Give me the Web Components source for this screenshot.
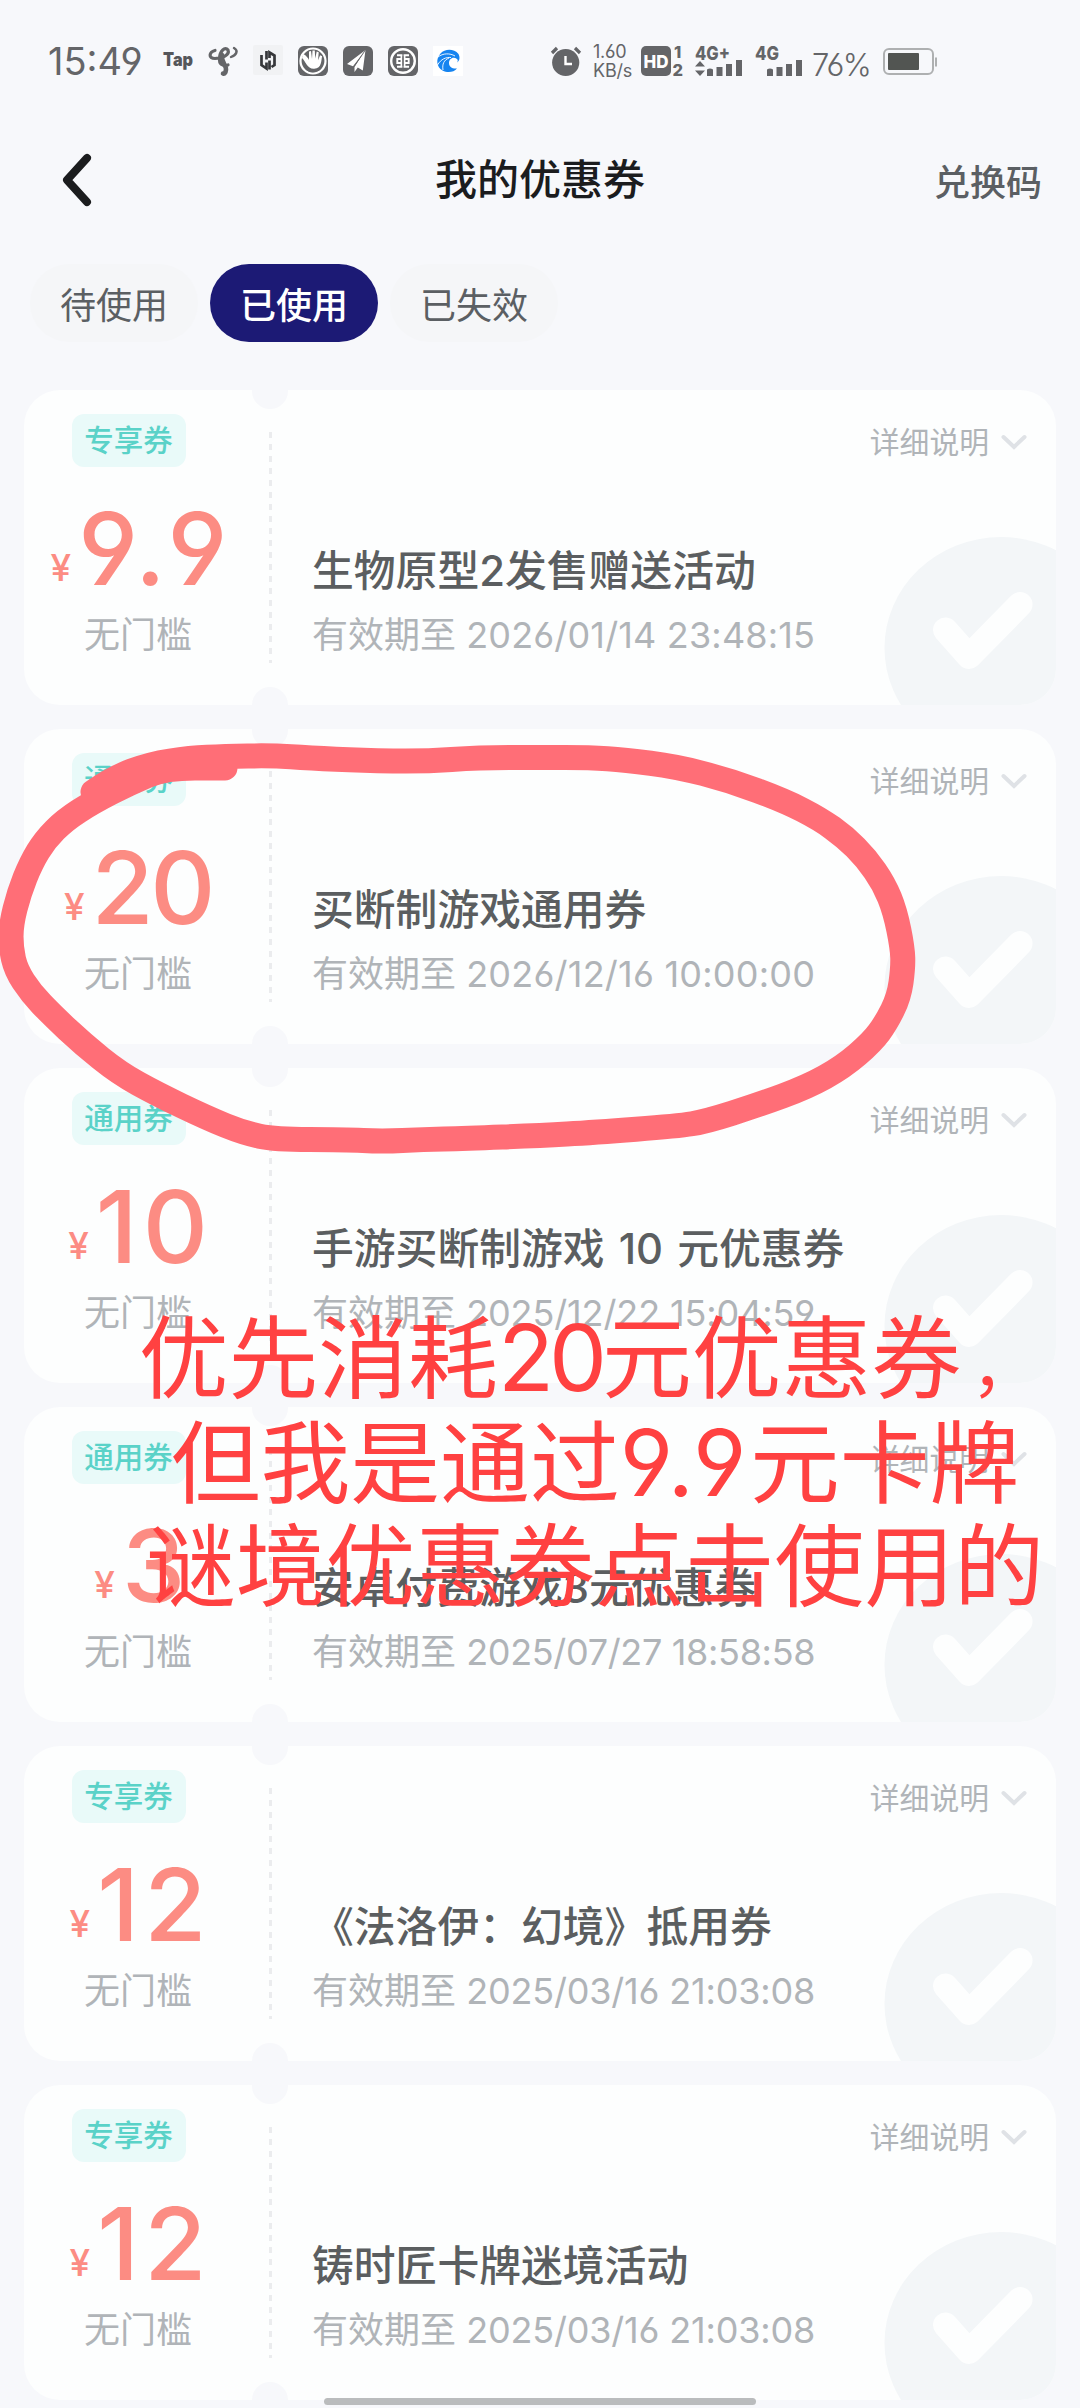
<!DOCTYPE html>
<html lang="zh-CN">
<head>
<meta charset="utf-8">
<title>我的优惠券</title>
<style>
html,body{margin:0;padding:0;background:#f7f8fb}
body{width:1080px;height:2408px;overflow:hidden;font-family:Inter,"Noto Sans CJK SC",sans-serif;font-feature-settings:"cv03","cv04"}
</style>
</head>
<body>
<coupon-screen></coupon-screen>
<script>
const define = (name, html, setup) => {
  const tpl = document.createElement('template');
  tpl.innerHTML = html;
  customElements.define(name, class extends HTMLElement {
    connectedCallback() {
      if (this.shadowRoot) return;
      this.attachShadow({mode: 'open'}).append(tpl.content.cloneNode(true));
      if (setup) setup(this, this.shadowRoot);
    }
  });
};

define('status-bar', `
<style>
:host{display:flex;height:92px;padding-top:30px;box-sizing:border-box;align-items:center;color:#646568}
svg{display:block;flex:none;overflow:visible}
.time{width:114px;padding-left:48px;box-sizing:border-box;font-size:38px;line-height:46px;white-space:nowrap;flex:none}
.left{display:flex;align-items:center;width:551px;flex:none}
.apps{display:flex;gap:15px;margin-left:49px}
.right{display:flex;align-items:center}
.speed{display:flex;flex-direction:column;width:40px;margin:0 8px 0 12px;font-size:18px;line-height:19px;letter-spacing:-.2px;white-space:nowrap}
.pct{font-size:31px;letter-spacing:-.4px;font-weight:300;line-height:38px;margin:7px 0 0 8px;width:72px;white-space:nowrap}
text{font-family:Inter,sans-serif}
</style>
<div class="left">
  <div class="time">15:49</div>
  <div class="apps">
    <svg width="30" height="30" viewBox="0 0 30 30"><text x="0" y="20" font-size="18.5" font-weight="900" fill="#55565a" textLength="30" lengthAdjust="spacingAndGlyphs">Tap</text></svg>
    <svg width="30" height="30" viewBox="0 0 30 30" fill="none" stroke="#646568" stroke-linecap="round"><path d="M7 4.500C1 6 0 12.500 7 12.500C14 12.500 22 9 20 4C17 0 12 5 11.500 12C11 18 14 20.500 20 19" stroke-width="3.200"/><path d="M14 9C13 17 18.500 19 18 23.500C17.500 26.500 17 28 15 27.500" stroke-width="4.600"/><path d="M26 2C31 5 28 9 23 11" stroke-width="2.400"/></svg>
    <svg width="30" height="30" viewBox="0 0 30 30"><rect width="30" height="30" rx="2" y="-1" fill="#f1f2f4"/><path d="M8.500 9v10l5 3.500v-6M13.500 5v8.500M16.500 23.500v-9M16.500 12V6.500l5 3v9.500l-3 2" fill="none" stroke="#36373a" stroke-width="2.700"/></svg>
    <svg width="30" height="30" viewBox="0 0 30 30"><rect width="30" height="30" rx="6" fill="#646568"/><circle cx="15" cy="15" r="12.500" fill="none" stroke="#fff" stroke-width="2.200"/><path d="M5 8c3 1 5 4 6 6V5.500l2-.5 1 8 .5-8.500 2.300 0 .4 8 1.500-7 2 .7-.6 8 2-5 2 1c-1 4 0 12-8 12.500C9 23 8 16 4 12z" fill="#fff"/><path d="M8 23c3 3 10 4 15-1" stroke="#646568" stroke-width="1.500" fill="none"/></svg>
    <svg width="30" height="30" viewBox="0 0 30 30"><rect width="30" height="30" rx="6" fill="#646568"/><path d="M22.500 4L4 18l6 2.200zM22.500 4L11.500 21v5l3.300-4.500 5 3z" fill="#fff"/><path d="M22.500 4L11 20.500" stroke="#646568" stroke-width=".8"/></svg>
    <svg width="30" height="30" viewBox="0 0 30 30"><rect width="30" height="30" rx="6" fill="#646568"/><g fill="none" stroke="#fff"><circle cx="15" cy="15" r="11.800" stroke-width="2.400"/><path d="M9 9.200h12M9 20.800h12M13.500 9v12M16.500 9v12M13.500 13H9.300v4h4.200M16.500 13h4.200v4h-4.200" stroke-width="1.900"/></g><path d="M15 8v14" stroke="#646568" stroke-width="1.200"/></svg>
    <svg width="30" height="30" viewBox="0 0 30 30"><rect width="30" height="30" fill="#fff"/><path d="M25.500 8C21 2.500 12 2.500 7.500 7.500C2.500 13 3.500 21 9.500 24.500C15 27.500 21 26 24 22.500C19 23 16 20.500 16 17C16 13 20 10 24 13C25 14 25 15 24 16.500C27 14.500 27 11 25.500 8z" fill="#1684f0"/><path d="M5 11C10 7 17 7 22 10M4.500 19C8 13 13 11 18 11.500M10 24C9 18 11 14 16 12" fill="none" stroke="#fff" stroke-width=".9"/></svg>
  </div>
</div>
<div class="right">
  <svg width="30" height="30" viewBox="0 0 30 30"><circle cx="14.700" cy="16.500" r="13.600" fill="#646568"/><path d="M1 7l5-5M29 7l-5-5" stroke="#646568" stroke-width="3.200"/><path d="M14.500 10v8h6.500" fill="none" stroke="#fff" stroke-width="2.400"/></svg>
  <div class="speed"><span>1.60</span><span>KB/s</span></div>
  <svg width="43" height="32" viewBox="0 0 43 32"><rect y="1" width="30" height="30" rx="5" fill="#646568"/><text x="2.500" y="22.500" font-size="18" font-weight="800" fill="#fff" textLength="25" lengthAdjust="spacingAndGlyphs">HD</text><g font-size="16.500" font-weight="800" fill="#646568"><text x="33" y="13">1</text><text x="31.500" y="31">2</text></g></svg>
  <svg width="49" height="32" viewBox="0 0 49 32" fill="#646568" style="margin-left:11px"><text x="0" y="15" font-size="19" font-weight="800" textLength="35" lengthAdjust="spacingAndGlyphs">4G+</text><path d="M5 16l5 5.500H0zM5 31l5-5.500H0zM12 24.500q3-2 6 0V31h-6zM21.500 22h6v9h-6zM31 19h6v12h-6zM41 15h6v16h-6z"/></svg>
  <svg width="49" height="32" viewBox="0 0 49 32" fill="#646568" style="margin-left:11px"><text x="0" y="15" font-size="19" font-weight="800" textLength="24" lengthAdjust="spacingAndGlyphs">4G</text><path d="M12 24.500q3-2 6 0V31h-6zM21.500 22h6v9h-6zM31 19h6v12h-6zM41 15h6v16h-6z"/></svg>
  <div class="pct">76%</div>
  <svg width="55" height="32" viewBox="0 0 55 32"><rect x="0" y="4" width="49" height="25" rx="5" fill="none" stroke="#aeb0b1" stroke-width="2"/><rect x="4" y="8" width="31" height="17" rx="1" fill="#525552"/><rect x="51" y="12.500" width="2" height="9" fill="#aeb0b1"/></svg>
</div>`);

define('nav-bar', `
<style>
:host{display:grid;grid-template-columns:1fr auto 1fr;align-items:center;height:144px;margin-top:16px;padding:0 38px;box-sizing:border-box}
svg{display:block;margin-left:22px}
h1{margin:0;font-size:42px;font-weight:500;color:#1b1c1e;line-height:60px}
.act{justify-self:end;font-size:36px;font-weight:500;color:#5b5f63;margin-bottom:1px}
</style>
<svg width="36" height="60" viewBox="0 0 36 60" fill="none" stroke="#1b1c1e" stroke-width="8" stroke-linecap="round" stroke-linejoin="round"><path d="M27 8L7 30L27 52"/></svg>
<h1><slot></slot></h1>
<div class="act"><slot name="action"></slot></div>`);

define('tab-pill', `
<style>
:host{display:flex;align-items:center;justify-content:center;width:168px;height:78px;border-radius:39px;background:#f5f6f8;color:#5b5f63;font-size:36px;box-sizing:border-box}
:host([active]){background:#1c1a75;color:#fff;font-weight:500}
</style><slot></slot>`);

define('coupon-card', `
<style>
:host{display:grid;grid-template-columns:246px 1fr;height:315px;border-radius:36px;background:#fdfefe;overflow:hidden;position:relative;flex:none}
:host::before,:host::after{content:"";position:absolute;left:228px;width:36px;height:36px;border-radius:18px;background:#f7f8fb}
:host::before{top:-17px}
:host::after{bottom:-18px}
.mark{position:absolute;right:0;bottom:0;width:172px;height:168px}
.left{display:flex;flex-direction:column;align-items:center;padding:24px 18px 0 0;position:relative}
.tag{align-self:flex-start;margin-left:48px;width:114px;height:53px;border-radius:12px;background:#e9faf9;color:#5ad2c8;font-size:29.500px;font-weight:500;display:flex;align-items:center;justify-content:center;line-height:53px;padding-right:1px;box-sizing:border-box}
.amount{display:flex;align-items:baseline;height:100px;line-height:100px;margin-top:31px;color:#fc8c83}
.yen{font-size:37px;font-weight:500;margin-right:7px;transform:translateY(-4px)}
.num{font-size:101px;font-weight:500}
.cond{height:50px;line-height:50px;margin-top:12px;font-size:36px;color:#b0b4b8}
.dash{position:absolute;right:-2px;top:42px;width:3px;height:231px;background:repeating-linear-gradient(#ebecee 0 6px,transparent 6px 12px)}
.right{display:flex;flex-direction:column;padding-left:42px;position:relative}
.more{display:flex;justify-content:flex-end;align-items:center;gap:11px;height:100px;padding-right:28px;font-size:29.800px;color:#b0b4b8}
.more svg{margin-top:3px}
.title{height:60px;line-height:60px;margin-top:51px;font-size:41.800px;font-weight:500;color:#5b5e60;white-space:pre;word-spacing:3px}
.date{height:50px;line-height:50px;margin-top:9px;font-size:36px;color:#b0b4b8;white-space:pre}
svg{display:block}
</style>
<svg class="mark" viewBox="0 0 172 168"><ellipse cx="117" cy="111" rx="116.500" ry="111" fill="#f3f6f8"/><path d="M61.500 93L85 119.500L136 67.500" fill="none" stroke="#fdfefe" stroke-width="25" stroke-linecap="round" stroke-linejoin="round"/></svg>
<div class="left">
  <div class="tag"></div>
  <div class="amount"><span class="yen">¥</span><span class="num"></span></div>
  <div class="cond">无门槛</div>
  <div class="dash"></div>
</div>
<div class="right">
  <div class="more">详细说明<svg width="28" height="20" viewBox="0 0 28 20" fill="none" stroke="#dfe2e6" stroke-width="4" stroke-linecap="round"><path d="M3.500 5L14 15L24.500 5"/></svg></div>
  <div class="title"><slot></slot></div>
  <div class="date">有效期至 <span></span></div>
</div>`, (host, root) => {
  root.querySelector('.tag').textContent = host.getAttribute('tag');
  const amount = host.getAttribute('amount');
  const num = root.querySelector('.num');
  num.textContent = amount;
  num.style.letterSpacing = amount.includes('.') ? '7px' : amount.startsWith('1') ? '5px' : '-3.5px';
  if (amount.includes('.')) num.style.marginRight = '-9px';
  if (amount.startsWith('1')) num.style.marginRight = '-5px';
  const date = root.querySelector('.date span');
  const text = host.getAttribute('until');
  date.textContent = text;
  // every timestamp fills the same column width
  date.style.letterSpacing = (349 - date.getBoundingClientRect().width) / text.length + 'px';
});

define('marker-ring', `
<style>:host{display:block;position:absolute;left:0;top:0;pointer-events:none}svg{display:block}</style>
<svg width="1080" height="1300" viewBox="0 0 1080 1300"><path fill="none" stroke="#ff6e77" stroke-width="25" stroke-linecap="round" stroke-linejoin="round"/></svg>`,
(host, root) => {
  const p = [[93,792],[113,778],[150,764],[190,758],[224,756.5],[272,755.5],[310,758],[362,760.5],[424,761.5],[479,757.5],[540,757.5],[590,757.5],[625,760],[676,766.5],[730,780.5],[785,801],[820,819],[845,837],[866,858],[884,884],[895,911],[902.5,948],[903,968],[899,997],[886,1023],[872,1042],[843,1067],[807,1087],[758,1105],[706,1121.5],[678,1126],[594,1132.5],[540,1135.5],[465,1138.5],[423,1139.5],[382,1141.5],[344,1139.5],[275,1139.5],[244,1133],[207,1118],[157,1094],[119,1073],[83,1044],[52,1015],[31,993],[16,970],[11,948],[11,925],[19,893],[31,863],[45,840],[65,820],[93,802],[130,783],[165,768],[225,768]];
  let d = 'M' + p[0];
  for (let i = 1; i < p.length - 1; i++)
    d += `Q${p[i]} ${(p[i][0] + p[i + 1][0]) / 2},${(p[i][1] + p[i + 1][1]) / 2}`;
  root.querySelector('path').setAttribute('d', d + 'L' + p.at(-1));
});

define('red-note', `
<style>
:host{display:flex;flex-direction:column;position:absolute;left:115px;top:1306px;width:960px;font-size:89.800px;line-height:104.500px;color:#ff4141;text-align:center;white-space:nowrap}
div{height:104.500px}
i{font-style:normal;font-size:92px;font-weight:400;letter-spacing:-5px}
i.w{letter-spacing:3.500px}
.c{display:inline-block;width:90px;text-align:left;font-size:66px;text-indent:10px;line-height:90px}
</style>
<div>优先消耗<i>20</i>元优惠券<span class="c">，</span></div>
<div>但我是通过<i class="w">9.9</i>元卡牌</div>
<div>谜境优惠券点击使用的</div>`);

define('coupon-screen', `
<style>
:host{display:flex;flex-direction:column;width:1080px;height:2408px;overflow:hidden;position:relative;background:#f7f8fb}
.tabs{display:flex;gap:12px;padding:12px 30px 0}
.list{display:flex;flex-direction:column;gap:24px;padding:48px 24px 0}
.home{position:absolute;left:324px;top:2398px;width:432px;height:7px;border-radius:4px;background:#babcbd}
</style>
<status-bar></status-bar>
<nav-bar>我的优惠券<span slot="action">兑换码</span></nav-bar>
<div class="tabs"><tab-pill>待使用</tab-pill><tab-pill active>已使用</tab-pill><tab-pill>已失效</tab-pill></div>
<div class="list">
<coupon-card tag="专享券" amount="9.9" until="2026/01/14 23:48:15">生物原型2发售赠送活动</coupon-card>
<coupon-card tag="通用券" amount="20" until="2026/12/16 10:00:00">买断制游戏通用券</coupon-card>
<coupon-card tag="通用券" amount="10" until="2025/12/22 15:04:59">手游买断制游戏 10 元优惠券</coupon-card>
<coupon-card tag="通用券" amount="3" until="2025/07/27 18:58:58">安卓付费游戏3元优惠券</coupon-card>
<coupon-card tag="专享券" amount="12" until="2025/03/16 21:03:08">《法洛伊：幻境》抵用券</coupon-card>
<coupon-card tag="专享券" amount="12" until="2025/03/16 21:03:08">铸时匠卡牌迷境活动</coupon-card>
</div>
<marker-ring></marker-ring>
<red-note></red-note>
<div class="home"></div>`);
</script>
</body>
</html>
